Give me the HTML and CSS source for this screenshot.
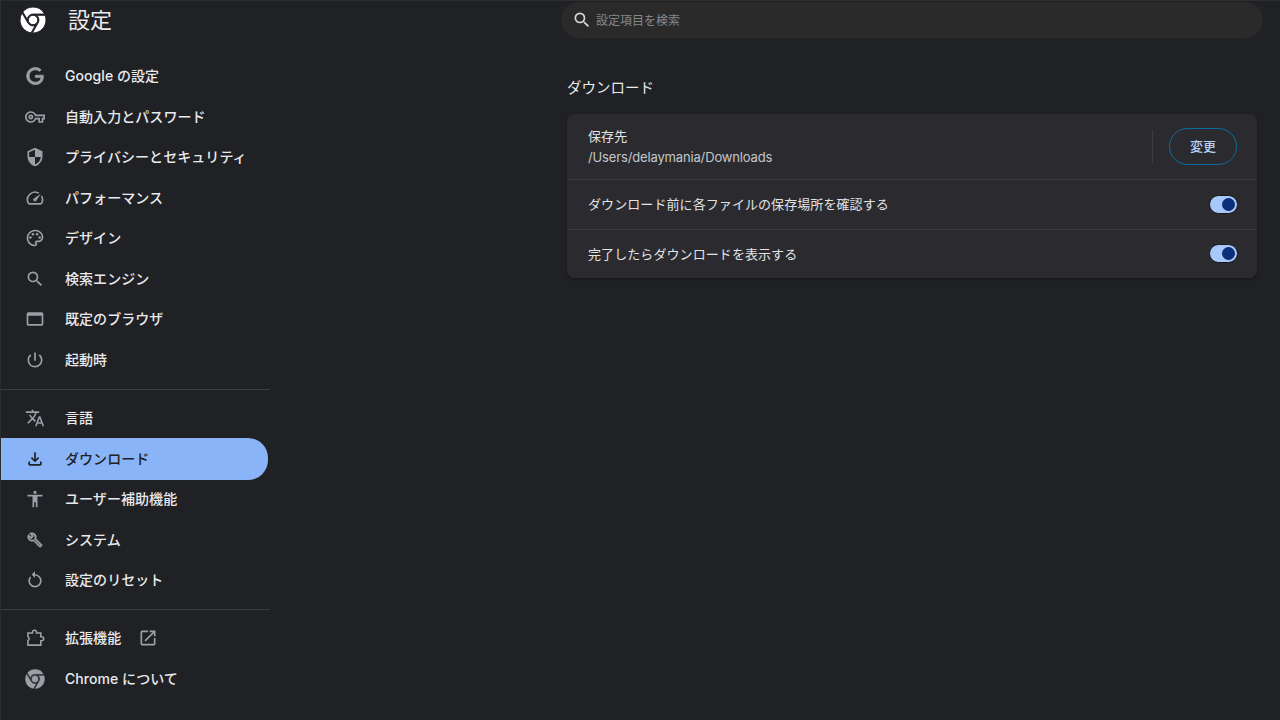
FILE: index.html
```html
<!DOCTYPE html>
<html lang="ja">
  <head>
    <meta charset="UTF-8" />
    <title>設定</title>
    <link rel="stylesheet" href="styles.css">
  </head>
  <body>
    <div class="page">
      <aside class="sidebar">
        <div class="brand">
          <svg class="brand-logo" viewBox="0 0 24 24"><path d="M12 0C8.21 0 4.831 1.757 2.632 4.501l3.953 6.848A5.454 5.454 0 0 1 12 6.545h10.691A12 12 0 0 0 12 0zM1.931 5.47A11.943 11.943 0 0 0 0 12c0 6.012 4.42 10.991 10.189 11.864l3.953-6.847a5.45 5.45 0 0 1-6.865-2.29zm13.342 2.166a5.446 5.446 0 0 1 1.45 7.09l.002.001h-.002l-5.344 9.257c.206.01.413.016.621.016 6.627 0 12-5.373 12-12 0-1.54-.29-3.011-.818-4.364zM12 16.364a4.364 4.364 0 1 1 0-8.728 4.364 4.364 0 0 1 0 8.728Z"/></svg>
          <h1 class="brand-title">設定</h1>
        </div>
        <nav class="menu">
          <a class="menu-item"><svg class="icon icon-g" viewBox="-2 -2 28 28"><path d="M12.48 10.92v3.28h7.84c-.24 1.84-.853 3.187-1.787 4.133-1.147 1.147-2.933 2.4-6.053 2.4-4.827 0-8.6-3.893-8.6-8.72s3.773-8.72 8.6-8.72c2.6 0 4.507 1.027 5.907 2.347l2.307-2.307C18.747 1.44 16.133 0 12.48 0 5.867 0 .307 5.387.307 12s5.56 12 12.173 12c3.573 0 6.267-1.173 8.373-3.36 2.16-2.16 2.84-5.213 2.84-7.667 0-.76-.053-1.467-.173-2.053H12.48z"/></svg><span>Google の設定</span></a>
          <a class="menu-item"><svg class="icon" viewBox="0 0 24 24"><path d="M22 19h-6v-4h-2.68c-1.14 2.42-3.6 4-6.32 4-3.86 0-7-3.14-7-7s3.14-7 7-7c2.72 0 5.17 1.58 6.32 4H24v6h-2v4zm-4-2h2v-4h2v-2H11.94l-.23-.67C11.01 8.34 9.11 7 7 7c-2.76 0-5 2.24-5 5s2.24 5 5 5c2.11 0 4.01-1.34 4.71-3.33l.23-.67H18v4zM7 15c-1.65 0-3-1.35-3-3s1.35-3 3-3 3 1.35 3 3-1.35 3-3 3zm0-4c-.55 0-1 .45-1 1s.45 1 1 1 1-.45 1-1-.45-1-1-1z"/></svg><span>自動入力とパスワード</span></a>
          <a class="menu-item"><svg class="icon" viewBox="0 0 24 24"><path d="M12 1L3 5v6c0 5.55 3.84 10.74 9 12 5.16-1.26 9-6.45 9-12V5l-9-4zm0 10.99h7c-.53 4.12-3.28 7.79-7 8.94V12H5V6.3l7-3.11v8.8z"/></svg><span>プライバシーとセキュリティ</span></a>
          <a class="menu-item"><svg class="icon" viewBox="0 0 24 24"><path d="M20.38 8.57l-1.23 1.85a8 8 0 0 1-.22 7.58H5.07A8 8 0 0 1 15.58 6.85l1.85-1.23A10 10 0 0 0 3.35 19a2 2 0 0 0 1.72 1h13.85a2 2 0 0 0 1.74-1 10 10 0 0 0-.27-10.44zm-9.79 6.84a2 2 0 0 0 2.83 0l5.66-8.49-8.49 5.66a2 2 0 0 0 0 2.83z"/></svg><span>パフォーマンス</span></a>
          <a class="menu-item"><svg class="icon" viewBox="0 0 24 24"><path d="M12 22C6.49 22 2 17.51 2 12S6.49 2 12 2s10 4.04 10 9c0 3.31-2.69 6-6 6h-1.77c-.28 0-.5.22-.5.5 0 .12.05.23.13.33.41.47.64 1.06.64 1.67A2.5 2.5 0 0 1 12 22zm0-18c-4.41 0-8 3.59-8 8s3.59 8 8 8c.28 0 .5-.22.5-.5a.54.54 0 0 0-.14-.35c-.41-.46-.63-1.05-.63-1.65a2.5 2.5 0 0 1 2.5-2.5H16c2.21 0 4-1.79 4-4 0-3.86-3.59-7-8-7z"/><circle cx="6.5" cy="11.5" r="1.5"/><circle cx="9.5" cy="7.5" r="1.5"/><circle cx="14.5" cy="7.5" r="1.5"/><circle cx="17.5" cy="11.5" r="1.5"/></svg><span>デザイン</span></a>
          <a class="menu-item"><svg class="icon" viewBox="0 0 24 24"><path d="M15.5 14h-.79l-.28-.27A6.471 6.471 0 0 0 16 9.5 6.5 6.5 0 1 0 9.5 16c1.61 0 3.09-.59 4.23-1.57l.27.28v.79l5 4.99L20.49 19l-4.99-5zm-6 0C7.01 14 5 11.99 5 9.5S7.01 5 9.5 5 14 7.01 14 9.5 11.99 14 9.5 14z"/></svg><span>検索エンジン</span></a>
          <a class="menu-item"><svg class="icon" viewBox="0 0 24 24"><path d="M20 4H4a2 2 0 0 0-2 2v12c0 1.1.9 2 2 2h16a2 2 0 0 0 2-2V6a2 2 0 0 0-2-2zm0 14H4V8h16v10z"/></svg><span>既定のブラウザ</span></a>
          <a class="menu-item"><svg class="icon" viewBox="0 0 24 24"><path d="M13 3h-2v10h2V3zm4.83 2.17l-1.42 1.42A6.92 6.92 0 0 1 19 12c0 3.87-3.13 7-7 7A6.995 6.995 0 0 1 7.58 6.58L6.17 5.17A8.932 8.932 0 0 0 3 12a9 9 0 0 0 18 0c0-2.74-1.23-5.18-3.17-6.83z"/></svg><span>起動時</span></a>
          <hr class="menu-line" />
          <a class="menu-item"><svg class="icon" viewBox="0 0 24 24"><path d="M12.87 15.07l-2.54-2.51.03-.03A17.52 17.52 0 0 0 14.07 6H17V4h-7V2H8v2H1v1.99h11.17C11.5 7.92 10.44 9.75 9 11.35 8.07 10.32 7.3 9.19 6.69 8h-2c.73 1.63 1.73 3.17 2.98 4.56l-5.09 5.02L4 19l5-5 3.11 3.11.76-2.04zM18.5 10h-2L12 22h2l1.12-3h4.75L21 22h2l-4.5-12zm-2.62 7l1.62-4.33L19.12 17h-3.24z"/></svg><span>言語</span></a>
          <a class="menu-item active"><svg class="icon" viewBox="0 0 24 24"><path d="M18 15v3H6v-3H4v3c0 1.1.9 2 2 2h12c1.1 0 2-.9 2-2v-3h-2zm-1-4l-1.41-1.41L13 12.17V4h-2v8.17L8.41 9.59 7 11l5 5 5-5z"/></svg><span>ダウンロード</span></a>
          <a class="menu-item"><svg class="icon" viewBox="0 0 24 24"><path d="M12 2a2 2 0 1 1 0 4 2 2 0 0 1 0-4zm9 7h-6v13h-2v-6h-2v6H9V9H3V7h18v2z"/></svg><span>ユーザー補助機能</span></a>
          <a class="menu-item"><svg class="icon icon-wrench" viewBox="-3 -3 30 30"><path d="M22.61 18.99l-9.08-9.08c.93-2.34.45-5.1-1.44-7C9.79.61 6.21.4 3.66 2.26L7.5 6.11 6.08 7.52 2.25 3.69C.39 6.23.6 9.82 2.9 12.11c1.86 1.86 4.57 2.35 6.89 1.48l9.11 9.11c.39.39 1.02.39 1.41 0l2.3-2.3c.4-.38.4-1.01 0-1.41zm-3 1.6l-9.46-9.46c-.61.45-1.29.72-2 .82-1.36.2-2.79-.21-3.83-1.25C3.37 9.76 2.93 8.5 3 7.26l3.09 3.09 4.24-4.24-3.09-3.09c1.24-.07 2.49.37 3.44 1.31a4.469 4.469 0 0 1 1.24 3.96 4.35 4.35 0 0 1-.88 1.96l9.45 9.45-.88.89z"/></svg><span>システム</span></a>
          <a class="menu-item"><svg class="icon" viewBox="0 0 24 24"><path d="M12 5V1.5L8 5.5l4 4V7c3.31 0 6 2.69 6 6s-2.69 6-6 6-6-2.69-6-6c0-1.4.48-2.7 1.3-3.7L5.9 7.9A7.96 7.96 0 0 0 4 13c0 4.42 3.58 8 8 8s8-3.58 8-8-3.58-8-8-8z"/></svg><span>設定のリセット</span></a>
          <hr class="menu-line menu-line-last" />
          <a class="menu-item"><svg class="icon icon-ext" viewBox="0 0 24 24"><path d="M3.5 6H9V5a2.4 2.4 0 0 1 4.8 0v1H19v4.5h1a2.4 2.4 0 0 1 0 4.8h-1v5.2H3.5V15a2.5 2.5 0 0 0 0-4.5z"/></svg><span>拡張機能</span><svg class="icon icon-open" viewBox="0 0 24 24"><path d="M19 19H5V5h7V3H5a2 2 0 0 0-2 2v14a2 2 0 0 0 2 2h14c1.1 0 2-.9 2-2v-7h-2v7zM14 3v2h3.59l-9.83 9.83 1.41 1.41L19 6.41V10h2V3h-7z"/></svg></a>
          <a class="menu-item"><svg class="icon icon-chrome" viewBox="0 0 24 24"><path d="M12 0C8.21 0 4.831 1.757 2.632 4.501l3.953 6.848A5.454 5.454 0 0 1 12 6.545h10.691A12 12 0 0 0 12 0zM1.931 5.47A11.943 11.943 0 0 0 0 12c0 6.012 4.42 10.991 10.189 11.864l3.953-6.847a5.45 5.45 0 0 1-6.865-2.29zm13.342 2.166a5.446 5.446 0 0 1 1.45 7.09l.002.001h-.002l-5.344 9.257c.206.01.413.016.621.016 6.627 0 12-5.373 12-12 0-1.54-.29-3.011-.818-4.364zM12 16.364a4.364 4.364 0 1 1 0-8.728 4.364 4.364 0 0 1 0 8.728Z"/></svg><span>Chrome について</span></a>
        </nav>
      </aside>
      <main class="content">
        <div class="search">
          <svg class="search-icon" viewBox="0 0 24 24"><path d="M15.5 14h-.79l-.28-.27A6.471 6.471 0 0 0 16 9.5 6.5 6.5 0 1 0 9.5 16c1.61 0 3.09-.59 4.23-1.57l.27.28v.79l5 4.99L20.49 19l-4.99-5zm-6 0C7.01 14 5 11.99 5 9.5S7.01 5 9.5 5 14 7.01 14 9.5 11.99 14 9.5 14z"/></svg>
          <span class="search-text">設定項目を検索</span>
        </div>
        <section class="panel">
          <h2 class="panel-title">ダウンロード</h2>
          <div class="card">
            <div class="row row-first">
              <div class="row-label">
                <div>保存先</div>
                <div class="row-path">/Users/delaymania/Downloads</div>
              </div>
              <span class="row-sep"></span>
              <button class="btn">変更</button>
            </div>
            <div class="row">
              <div class="row-label">ダウンロード前に各ファイルの保存場所を確認する</div>
              <span class="toggle"><span class="knob"></span></span>
            </div>
            <div class="row">
              <div class="row-label">完了したらダウンロードを表示する</div>
              <span class="toggle"><span class="knob"></span></span>
            </div>
          </div>
        </section>
      </main>
    </div>
  </body>
</html>
```

FILE: styles.css
```css
* {
  padding: 0;
  margin: 0;
  box-sizing: border-box;
}
html,
body {
  height: 100%;
}
body {
  background-color: #202124;
  color: #e8eaed;
  font-family: Inter, "Noto Sans CJK JP", sans-serif;
  overflow: hidden;
}
.page {
  display: flex;
  height: 720px;
  border-top: 1px solid #2c2d30;
  border-left: 1px solid #2c2d30;
}
.sidebar {
  width: 269px;
  flex-shrink: 0;
}
.brand {
  display: flex;
  align-items: center;
  height: 39px;
  padding-left: 19px;
}
.brand-logo {
  width: 26px;
  height: 26px;
  margin-top: -2px;
  fill: #fff;
  stroke: #202124;
  stroke-width: 0.9;
}
.brand-title {
  margin-left: 22px;
  padding-bottom: 5px;
  font-size: 22px;
  font-weight: 400;
  color: #e8eaed;
}
.menu {
  margin-top: 16px;
  display: flex;
  flex-direction: column;
}
.menu-item {
  display: flex;
  align-items: center;
  height: 40.5px;
  margin-right: 2px;
  padding-left: 23.5px;
  padding-bottom: 2px;
  font-size: 14px;
  font-weight: 500;
  letter-spacing: 0.06px;
  color: #e8eaed;
  border-radius: 0 20px 20px 0;
}
.menu-item.active {
  height: 41.5px;
  margin-top: -0.5px;
  margin-bottom: -0.5px;
  background-color: #8ab4f8;
  color: #202124;
}
.icon {
  width: 20px;
  height: 20px;
  margin-top: 2px;
  margin-right: 20.5px;
  flex-shrink: 0;
  fill: #9aa0a6;
}
.active .icon {
  fill: #202124;
}
.icon-g {
  stroke: #9aa0a6;
  stroke-width: 1;
}
.icon-wrench {
  stroke: #9aa0a6;
  stroke-width: 0.8;
}
.icon-ext {
  fill: none;
  stroke: #9aa0a6;
  stroke-width: 1.9;
}
.icon-chrome {
  stroke: #202124;
  stroke-width: 0.6;
}
.icon-open {
  margin-left: 17px;
  margin-right: 0;
}
.menu-line {
  border: 0;
  border-top: 1px solid #3c3d40;
  margin: 9px 0 8px;
}
.menu-line-last {
  margin-top: 8.5px;
}
.content {
  flex: 1;
  padding-left: 291px;
}
.search {
  display: flex;
  align-items: center;
  width: 702px;
  height: 36px;
  margin-top: 1px;
  padding-left: 11px;
  background-color: #2a2a2b;
  border-radius: 18px;
}
.search-icon {
  width: 20px;
  height: 20px;
  fill: #d5d7da;
}
.search-text {
  margin-left: 4px;
  padding-bottom: 2px;
  font-size: 12px;
  color: #85878a;
}
.panel {
  width: 690px;
  margin-left: 6px;
}
.panel-title {
  margin-top: 40px;
  font-size: 14.5px;
  font-weight: 400;
  line-height: 20px;
  color: #e8eaed;
}
.card {
  margin-top: 16px;
  background-color: #2b2b2f;
  border-radius: 8px;
  box-shadow: 0 1px 3px rgba(0, 0, 0, 0.4);
}
.row {
  display: flex;
  align-items: center;
  height: 49.5px;
  padding: 0 20px 0 21px;
  border-top: 1px solid #3d3d41;
  font-size: 13px;
  letter-spacing: 0.08px;
  color: #e3e3e6;
}
.row-first {
  height: 65px;
  border-top: 0;
}
.row-first .row-label {
  padding-bottom: 1px;
}
.row-label {
  flex: 1;
  line-height: 20px;
}
.row-path {
  margin-top: 1px;
  color: #c4c7cc;
  letter-spacing: -0.15px;
}
.row-sep {
  width: 1px;
  height: 33px;
  margin-right: 16px;
  background-color: #3d3d41;
}
.btn {
  width: 68px;
  height: 37px;
  padding-bottom: 2px;
  background: none;
  border: 1px solid #0b6c9e;
  border-radius: 19px;
  color: #b4cefa;
  font-family: inherit;
  font-size: 13px;
  font-weight: 500;
}
.toggle {
  display: flex;
  align-items: center;
  justify-content: flex-end;
  width: 29px;
  height: 19px;
  margin-right: -1px;
  padding-right: 2px;
  background-color: #a8c7fa;
  border: 1px solid #18191b;
  border-radius: 10px;
}
.knob {
  width: 13px;
  height: 13px;
  background-color: #0b2f78;
  border-radius: 50%;
}
```
